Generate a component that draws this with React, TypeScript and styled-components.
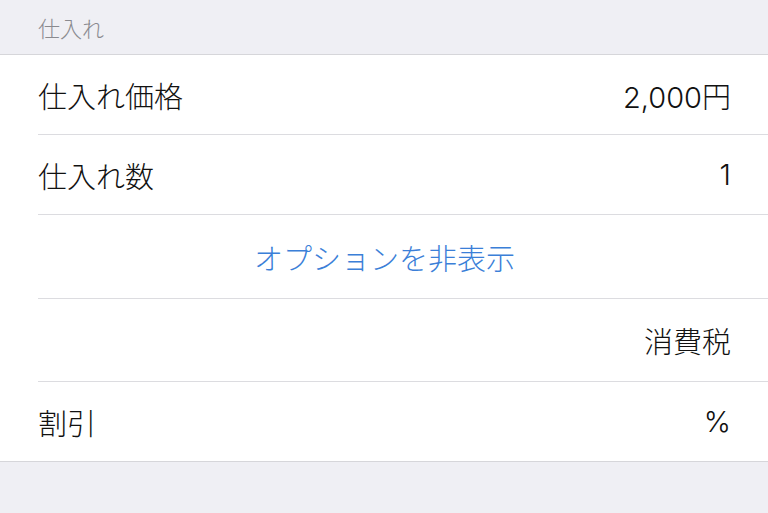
import React from "react";
import styled, { createGlobalStyle } from "styled-components";

const Global = createGlobalStyle`
  html, body { margin: 0; padding: 0; background: #efeff4; }
  body { font-family: "Inter", "Noto Sans CJK JP", sans-serif; -webkit-font-smoothing: antialiased; }
`;

const Page = styled.div`
  width: 768px;
  height: 513px;
  background: #efeff4;
  overflow: hidden;
`;

const SectionHeader = styled.div`
  height: 55px;
  box-sizing: border-box;
  padding: 0 38px;
  display: flex;
  align-items: center;
  font-size: 22px;
  font-weight: 300;
  color: #8a8a8f;
  border-bottom: 1px solid #d6d6da;
`;

const Group = styled.div`
  background: #fff;
  padding-left: 38px;
  border-bottom: 1px solid #d6d6da;
`;

const Row = styled.div<{ $h: number; $last?: boolean; $center?: boolean }>`
  height: ${(p) => p.$h}px;
  display: flex;
  align-items: center;
  justify-content: ${(p) => (p.$center ? "center" : "space-between")};
  padding-right: 37px;
  border-bottom: ${(p) => (p.$last ? "none" : "1px solid #dcdce0")};
  font-size: 29px;
  font-weight: 300;
  color: #111;
`;

const Label = styled.span``;
const Value = styled.span`
  margin-left: auto;
`;
const Action = styled.span`
  color: #3b7fd8;
`;

export default function App() {
  return (
    <Page>
      <Global />
      <SectionHeader>仕入れ</SectionHeader>
      <Group>
        <Row $h={79}>
          <Label>仕入れ価格</Label>
          <Value>2,000円</Value>
        </Row>
        <Row $h={79}>
          <Label>仕入れ数</Label>
          <Value>1</Value>
        </Row>
        <Row $h={83} $center>
          <Action>オプションを非表示</Action>
        </Row>
        <Row $h={82}>
          <Value>消費税</Value>
        </Row>
        <Row $h={79} $last>
          <Label>割引</Label>
          <Value>%</Value>
        </Row>
      </Group>
    </Page>
  );
}
